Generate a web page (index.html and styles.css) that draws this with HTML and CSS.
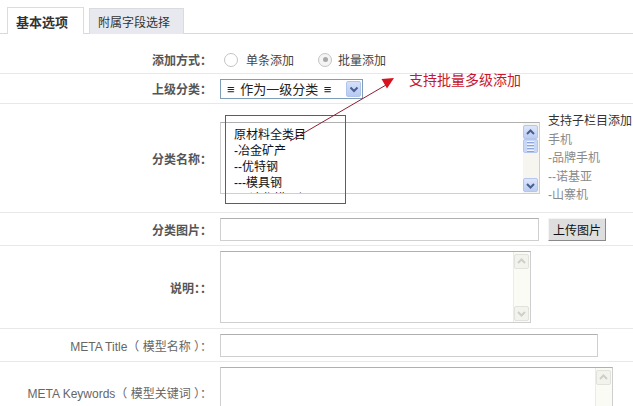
FILE: index.html
```html
<!DOCTYPE html>
<html lang="zh">
<head>
<meta charset="utf-8">
<title>分类</title>
<link rel="stylesheet" href="styles.css">
</head>
<body>
<div class="page">
  <div class="tabs">
    <div class="tab active">基本选项</div>
    <div class="tab">附属字段选择</div>
  </div>
  <div class="form">
    <div class="row r1">
      <div class="label">添加方式：</div>
      <div class="field">
        <span class="radio"></span><span class="rtext">单条添加</span>
        <span class="radio checked"></span><span class="rtext">批量添加</span>
      </div>
    </div>
    <div class="row r2">
      <div class="label">上级分类：</div>
      <div class="field">
        <div class="select">
          <span class="select-text">≡ 作为一级分类 ≡</span>
          <span class="select-btn"><svg width="12" height="12" viewBox="0 0 12 12"><polyline points="2.5,4.5 6,8 9.5,4.5" fill="none" stroke="#4a5f8c" stroke-width="2"/></svg></span>
        </div>
      </div>
    </div>
    <div class="row r3">
      <div class="label">分类名称：</div>
      <div class="field top">
        <div class="ta ta1">
          <div class="ta-content">原材料全类目<br>-冶金矿产<br>--优特钢<br>---模具钢<br>----冷作模具钢</div>
          <div class="sb">
            <span class="sb-btn"><svg width="11" height="11" viewBox="0 0 11 11"><polyline points="2,7 5.5,3.5 9,7" fill="none" stroke="#4a5f8c" stroke-width="2"/></svg></span>
            <span class="sb-thumb"><i></i><i></i><i></i><i></i></span>
            <span class="sb-track"></span>
            <span class="sb-btn"><svg width="11" height="11" viewBox="0 0 11 11"><polyline points="2,4 5.5,7.5 9,4" fill="none" stroke="#4a5f8c" stroke-width="2"/></svg></span>
          </div>
        </div>
        <div class="note">
          <div class="note-head">支持子栏目添加</div>
          <div>手机</div>
          <div>-品牌手机</div>
          <div>--诺基亚</div>
          <div>-山寨机</div>
        </div>
      </div>
    </div>
    <div class="row r4">
      <div class="label">分类图片：</div>
      <div class="field">
        <div class="input in-img"></div>
        <div class="btn">上传图片</div>
      </div>
    </div>
    <div class="row r5">
      <div class="label">说明：：</div>
      <div class="field">
        <div class="ta ta2">
          <div class="ta-content"></div>
          <div class="sb dis">
            <span class="sb-btn"><svg width="11" height="11" viewBox="0 0 11 11"><polyline points="2,7 5.5,3.5 9,7" fill="none" stroke="#cfcfc8" stroke-width="2"/></svg></span>
            <span class="sb-track"></span>
            <span class="sb-btn"><svg width="11" height="11" viewBox="0 0 11 11"><polyline points="2,4 5.5,7.5 9,4" fill="none" stroke="#cfcfc8" stroke-width="2"/></svg></span>
          </div>
        </div>
      </div>
    </div>
    <div class="row r6">
      <div class="label light">META Title（ 模型名称 ）：</div>
      <div class="field">
        <div class="input in-meta"></div>
      </div>
    </div>
    <div class="row r7">
      <div class="label light">META Keywords（ 模型关键词 ）：</div>
      <div class="field">
        <div class="ta ta3">
          <div class="ta-content"></div>
          <div class="sb dis">
            <span class="sb-btn"><svg width="11" height="11" viewBox="0 0 11 11"><polyline points="2,7 5.5,3.5 9,7" fill="none" stroke="#cfcfc8" stroke-width="2"/></svg></span>
            <span class="sb-track"></span>
            <span class="sb-btn"><svg width="11" height="11" viewBox="0 0 11 11"><polyline points="2,4 5.5,7.5 9,4" fill="none" stroke="#cfcfc8" stroke-width="2"/></svg></span>
          </div>
        </div>
      </div>
    </div>
  </div>
  <div class="annot-text">支持批量多级添加</div>
  <div class="annot-box"></div>
  <svg class="annot-arrow" width="633" height="406" viewBox="0 0 633 406">
    <line x1="290" y1="141" x2="386" y2="85" stroke="#8e1f33" stroke-width="1"/>
    <polygon points="394,78 387,88.5 381.5,79" fill="#d8121e"/>
  </svg>
</div>
</body>
</html>
```
FILE: styles.css
```css
html, body {
  margin: 0;
  padding: 0;
  background: #ffffff;
  overflow: hidden;
}
body {
  width: 633px;
  height: 406px;
  font-family: "Liberation Sans", "Noto Sans CJK SC", sans-serif;
  font-size: 12px;
  color: #333;
}
.page {
  position: relative;
  width: 633px;
  height: 406px;
  overflow: hidden;
}
.tabs {
  display: flex;
  align-items: flex-end;
  height: 34px;
  padding-left: 7px;
  box-sizing: border-box;
  border-bottom: 1px solid #d9d9d9;
}
.tab {
  height: 26px;
  box-sizing: border-box;
  margin-right: 5px;
  margin-bottom: -1px;
  border: 1px solid #d9dbe0;
  border-bottom: none;
  background: #e7e9ef;
  display: flex;
  align-items: center;
  padding: 0 13px 0 8px;
  font-size: 12px;
  color: #333;
}
.tab.active {
  background: #ffffff;
  border-color: #dcdcdc;
  height: 27px;
  width: 77px;
  margin-right: 5px;
  font-weight: bold;
  font-size: 13px;
  padding-left: 8px;
}
.form {
  display: flex;
  flex-direction: column;
}
.row {
  display: flex;
  align-items: center;
  border-bottom: 1px solid #e8e8e8;
  box-sizing: border-box;
}
.r1 { height: 40px; padding-top: 12px; }
.r2 { height: 30px; }
.r3 { height: 109px; align-items: stretch; }
.r3 .label { align-self: center; }
.r4 { height: 33px; }
.r5 { height: 83px; }
.r6 { height: 33px; }
.r7 { height: 80px; align-items: flex-start; padding-top: 5px; border-bottom: none; }
.r7 .label { padding-top: 17px; }
.label {
  flex: none;
  width: 212px;
  text-align: right;
  font-weight: bold;
  color: #555;
  font-size: 12px;
  white-space: nowrap;
}
.label.light {
  font-weight: normal;
  color: #666;
}
.field {
  display: flex;
  align-items: center;
  margin-left: 8px;
}
.radio {
  width: 12px;
  height: 12px;
  border: 1px solid #c4c4c4;
  border-radius: 50%;
  background: #fff;
  box-sizing: content-box;
  margin-left: 4px;
  display: flex;
  align-items: center;
  justify-content: center;
}
.radio.checked {
  margin-left: 24px;
  background: #f4f4f4;
}
.radio.checked::after {
  content: "";
  width: 5px;
  height: 5px;
  border-radius: 50%;
  background: #a8a8a8;
}
.rtext {
  margin-left: 8px;
  color: #444;
  font-size: 12px;
}
.radio.checked + .rtext { margin-left: 6px; }
.select {
  width: 143px;
  height: 20px;
  box-sizing: border-box;
  border: 1px solid #7f9db9;
  display: flex;
  align-items: center;
  justify-content: space-between;
  padding: 0 1px 0 6px;
  background: #fff;
}
.select-text {
  font-size: 13px;
  color: #222;
  white-space: nowrap;
  word-spacing: 2px;
}
.select-btn {
  width: 15px;
  height: 16px;
  background: linear-gradient(#d4e0fb, #b7caf3);
  border: 1px solid #b1c4ec;
  box-sizing: border-box;
  border-radius: 2px;
  display: flex;
  align-items: center;
  justify-content: center;
}
.ta {
  display: flex;
  box-sizing: border-box;
  border: 1px solid #cfcfcf;
  border-top-color: #b0b0b0;
  background: #fff;
  overflow: hidden;
}
.ta-content {
  flex: 1;
  overflow: hidden;
  padding: 4px 0 0 13px;
  font-size: 12px;
  line-height: 16px;
  color: #111;
}
.ta1 { width: 320px; height: 72px; align-self: center; }
.ta2 { width: 311px; height: 72px; }
.ta3 { width: 393px; height: 80px; }
.sb {
  width: 15px;
  flex: none;
  display: flex;
  flex-direction: column;
  padding: 2px 1px 1px 0;
  background: #f6f5f0;
}
.sb-btn {
  height: 14px;
  flex: none;
  box-sizing: border-box;
  border: 1px solid #b4c6ee;
  border-radius: 2px;
  background: linear-gradient(#dce6fc, #bccdf3);
  display: flex;
  align-items: center;
  justify-content: center;
}
.sb-thumb {
  height: 14px;
  flex: none;
  box-sizing: border-box;
  border: 1px solid #b4c6ee;
  border-radius: 2px;
  background: #c9d7f7;
  display: flex;
  flex-direction: column;
  align-items: center;
  justify-content: center;
  gap: 1px;
}
.sb-thumb i {
  display: block;
  width: 7px;
  height: 1px;
  background: #eef3fe;
  border-bottom: 1px solid #8da5d8;
}
.sb-track {
  flex: 1;
}
.sb.dis {
  background: #fbfbf6;
  border-left: 1px solid #ecece6;
}
.sb.dis .sb-btn {
  border-color: #e2e2dc;
  background: #f3f3ee;
  height: 15px;
}
.note {
  align-self: flex-start;
  margin-left: 8px;
  margin-top: 8px;
  font-size: 12px;
  line-height: 18.5px;
  color: #8a8a8a;
  white-space: nowrap;
}
.note-head {
  color: #333;
}
.input {
  height: 23px;
  box-sizing: border-box;
  border: 1px solid #cfcfcf;
  border-top-color: #b0b0b0;
  background: #fff;
}
.in-img { width: 319px; }
.in-meta { width: 378px; }
.btn {
  margin-left: 9px;
  width: 58px;
  height: 23px;
  box-sizing: border-box;
  border: 1px solid #8a8a8a;
  border-top-color: #f4f4f4;
  border-left-color: #f4f4f4;
  background: #dedede;
  display: flex;
  align-items: center;
  justify-content: center;
  font-size: 12px;
  color: #111;
}
.annot-text {
  position: absolute;
  left: 409px;
  top: 72px;
  font-size: 14px;
  line-height: 16px;
  color: #c8162c;
  white-space: nowrap;
}
.annot-box {
  position: absolute;
  left: 225px;
  top: 115px;
  width: 121px;
  height: 89px;
  box-sizing: border-box;
  border: 1px solid #d0283e;
  pointer-events: none;
}
.annot-arrow {
  position: absolute;
  left: 0;
  top: 0;
  pointer-events: none;
}
```
